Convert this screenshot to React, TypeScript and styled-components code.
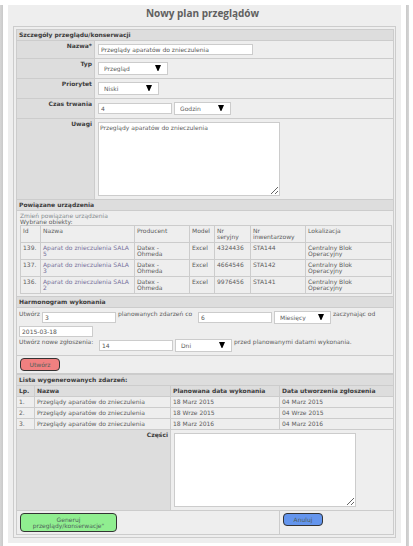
import React from "react";
import styled, { createGlobalStyle } from "styled-components";

const GlobalStyle = createGlobalStyle`
  * { box-sizing: border-box; }
  body {
    margin: 0;
    background: #fff;
    color: #5c5c5c;
    font-family: "DejaVu Sans", Verdana, sans-serif;
    font-size: 6px;
    line-height: 6px;
  }
`;

const line = "#cccccc";

const Page = styled.div`
  display: flex;
  min-height: 100vh;
  padding: 5px 4px 0 0;
`;

const Rail = styled.div<{ $side: "left" | "right" }>`
  flex: none;
  width: 3px;
  background: linear-gradient(to ${(p) => p.$side}, #c9c9c9, #d6d6d6);
`;

const Main = styled.main`
  flex: 1;
  min-width: 0;
  align-self: flex-start;
  margin: 0 5px;
  padding: 0 5px 5px;
  background: #eeeeee;
`;

const Title = styled.h1`
  margin: 0;
  padding: 2px 4px 7px 0;
  color: #606060;
  font-family: "Open Sans", "DejaVu Sans", sans-serif;
  font-size: 10px;
  line-height: 12px;
  text-align: center;
`;

const Frame = styled.form`
  padding: 2px 1px 2px 2px;
  border: 1px solid ${line};
`;

const Table = styled.table`
  width: 100%;
  border-collapse: collapse;
  table-layout: fixed;
`;

const Col = styled.col<{ $w?: number }>`
  width: ${(p) => (p.$w ? `${p.$w}px` : "auto")};
`;

const Cell = styled.td<{ $pad?: string }>`
  padding: ${(p) => p.$pad ?? "2px"};
  border: 1px solid ${line};
  text-align: left;
  vertical-align: top;
  white-space: pre-line;
`;

const HeadCell = styled.th<{ $align?: string }>`
  padding: 2px;
  border: 1px solid ${line};
  background: #dddddd;
  color: #3c3c3c;
  font-weight: bold;
  text-align: ${(p) => p.$align ?? "left"};
  vertical-align: top;
`;

const DeviceHead = styled.th`
  height: 17px;
  padding: 2px;
  border: 1px solid ${line};
  font-weight: normal;
  text-align: left;
  vertical-align: top;
  white-space: pre-line;
`;

const Line = styled.div`
  display: flex;
  align-items: center;
  gap: 2px;
`;

const Schedule = styled.div`
  display: flex;
  flex-direction: column;
  gap: 2px;
`;

const Caption = styled.label<{ $w?: number }>`
  align-self: flex-start;
  min-width: ${(p) => p.$w ?? 0}px;
  white-space: nowrap;
`;

const Input = styled.input<{ $wide?: boolean }>`
  display: block;
  width: ${(p) => (p.$wide ? 155 : 74)}px;
  height: 11px;
  padding: 0 2px;
  border: 1px solid ${line};
  border-radius: 0;
  background: #fff;
  color: #555;
  font: inherit;
`;

const TextArea = styled.textarea`
  display: block;
  width: 182px;
  height: 74px;
  padding: 2px 1px;
  border: 1px solid ${line};
  background: #fff;
  color: #5c5c5c;
  font: inherit;
  resize: both;
`;

const SelectBox = styled.span<{ $w: number }>`
  position: relative;
  display: block;
  width: ${(p) => p.$w}px;
  height: 13px;
`;

const NativeSelect = styled.select`
  display: block;
  width: 100%;
  height: 100%;
  padding: 0 14px 0 5px;
  border: 1px solid ${line};
  border-radius: 0;
  appearance: none;
  background: #fff;
  color: #5c5c5c;
  font: inherit;
`;

const Arrow = styled.svg`
  position: absolute;
  top: 3px;
  right: 7px;
  width: 6px;
  height: 6px;
  pointer-events: none;
`;

const Button = styled.button<{ $bg: string; $wide?: boolean }>`
  display: block;
  width: ${(p) => (p.$wide ? 97 : 40)}px;
  padding: 3px 2px 2px;
  border: 1px solid #333;
  border-radius: 4px;
  background: ${(p) => p.$bg};
  color: #4f5f5a;
  font: inherit;
  text-align: center;
`;

const Link = styled.a<{ $tone?: string }>`
  color: ${(p) => p.$tone ?? "#858c8e"};
  text-decoration: none;
`;

function Select({ id, label, value, width }: { id: string; label?: string; value: string; width: number }) {
  return (
    <SelectBox $w={width}>
      <NativeSelect id={id} aria-label={label} defaultValue={value}>
        <option>{value}</option>
      </NativeSelect>
      <Arrow viewBox="0 0 6 6" aria-hidden="true">
        <path d="M0 0H6L3.4 6H2.6Z" fill="#000" />
      </Arrow>
    </SelectBox>
  );
}

const deviceColumns = ["Id", "Nazwa", "Producent", "Model", "Nr\nseryjny", "Nr\ninwentarzowy", "Lokalizacja"];

const devices = [
  ["139.", "Aparat do znieczulenia SALA\n5", "Datex -\nOhmeda", "Excel", "4324436", "STA144", "Centralny Blok\nOperacyjny"],
  ["137.", "Aparat do znieczulenia SALA\n3", "Datex -\nOhmeda", "Excel", "4664546", "STA142", "Centralny Blok\nOperacyjny"],
  ["136.", "Aparat do znieczulenia SALA\n2", "Datex -\nOhmeda", "Excel", "9976456", "STA141", "Centralny Blok\nOperacyjny"],
];

const events = [
  ["1.", "Przeglądy aparatów do znieczulenia", "18 Marz 2015", "04 Marz 2015"],
  ["2.", "Przeglądy aparatów do znieczulenia", "18 Wrze 2015", "04 Wrze 2015"],
  ["3.", "Przeglądy aparatów do znieczulenia", "18 Marz 2016", "04 Marz 2016"],
];

function Field({ id, label, children }: { id: string; label: string; children: React.ReactNode }) {
  return (
    <tr>
      <HeadCell scope="row" $align="right">
        <label htmlFor={id}>{label}</label>
      </HeadCell>
      <Cell $pad="3px">{children}</Cell>
    </tr>
  );
}

function Section({ children }: { children: React.ReactNode }) {
  return (
    <tr>
      <HeadCell colSpan={2}>{children}</HeadCell>
    </tr>
  );
}

export default function App() {
  return (
    <>
      <GlobalStyle />
      <Page>
        <Rail $side="left" />
        <Main>
          <Title>Nowy plan przeglądów</Title>
          <Frame onSubmit={(e) => e.preventDefault()}>
            <Table>
              <colgroup>
                <Col $w={78} />
                <Col />
              </colgroup>
              <tbody>
                <Section>Szczegóły przeglądu/konserwacji</Section>
                <Field id="name" label="Nazwa*">
                  <Input id="name" $wide defaultValue="Przeglądy aparatów do znieczulenia" />
                </Field>
                <Field id="type" label="Typ">
                  <Select id="type" value="Przegląd" width={70} />
                </Field>
                <Field id="priority" label="Priorytet">
                  <Select id="priority" value="Niski" width={61} />
                </Field>
                <Field id="duration" label="Czas trwania">
                  <Line>
                    <Input id="duration" defaultValue="4" />
                    <Select id="duration-unit" label="Jednostka czasu" value="Godzin" width={57} />
                  </Line>
                </Field>
                <Field id="notes" label="Uwagi">
                  <TextArea id="notes" spellCheck={false} defaultValue="Przeglądy aparatów do znieczulenia" />
                </Field>
                <Section>Powiązane urządzenia</Section>
                <tr>
                  <Cell colSpan={2} $pad="2px 1px 2px 3px">
                    <div>
                      <Link href="#devices">Zmień powiązane urządzenia</Link>
                    </div>
                    <div>Wybrane obiekty:</div>
                    <Table id="devices">
                      <colgroup>
                        <Col $w={20} />
                        <Col $w={94} />
                        <Col $w={55} />
                        <Col $w={25} />
                        <Col $w={36} />
                        <Col $w={55} />
                        <Col />
                      </colgroup>
                      <thead>
                        <tr>
                          {deviceColumns.map((h) => (
                            <DeviceHead key={h} scope="col">{h}</DeviceHead>
                          ))}
                        </tr>
                      </thead>
                      <tbody>
                        {devices.map((row) => (
                          <tr key={row[0]}>
                            {row.map((text, i) => (
                              <Cell key={i}>
                                {i === 1 ? <Link href="#devices" $tone="#77719b">{text}</Link> : text}
                              </Cell>
                            ))}
                          </tr>
                        ))}
                      </tbody>
                    </Table>
                  </Cell>
                </tr>
                <Section>Harmonogram wykonania</Section>
                <tr>
                  <Cell colSpan={2} $pad="3px 2px">
                    <Schedule>
                      <Line>
                        <Caption htmlFor="count">Utwórz</Caption>
                        <Input id="count" defaultValue="3" />
                        <Caption htmlFor="every" $w={78}>planowanych zdarzeń co</Caption>
                        <Input id="every" defaultValue="6" />
                        <Select id="every-unit" label="Jednostka okresu" value="Miesięcy" width={57} />
                        <Caption htmlFor="start">zaczynając od</Caption>
                      </Line>
                      <Input id="start" defaultValue="2015-03-18" />
                      <Line>
                        <Caption htmlFor="lead" $w={78}>Utwórz nowe zgłoszenia:</Caption>
                        <Input id="lead" defaultValue="14" />
                        <Select id="lead-unit" label="Jednostka wyprzedzenia" value="Dni" width={57} />
                        <Caption htmlFor="lead">przed planowanymi datami wykonania.</Caption>
                      </Line>
                    </Schedule>
                  </Cell>
                </tr>
                <tr>
                  <Cell colSpan={2} $pad="2px 3px">
                    <Button type="button" $bg="#f08080">Utwórz</Button>
                  </Cell>
                </tr>
              </tbody>
            </Table>
            <Table>
              <colgroup>
                <Col $w={18} />
                <Col $w={136} />
                <Col $w={109} />
                <Col />
              </colgroup>
              <tbody>
                <tr>
                  <HeadCell colSpan={4}>Lista wygenerowanych zdarzeń:</HeadCell>
                </tr>
                <tr>
                  {["Lp.", "Nazwa", "Planowana data wykonania", "Data utworzenia zgłoszenia"].map((h) => (
                    <HeadCell key={h} scope="col">{h}</HeadCell>
                  ))}
                </tr>
                {events.map((row) => (
                  <tr key={row[0]}>
                    {row.map((text, i) => (
                      <Cell key={i}>{text}</Cell>
                    ))}
                  </tr>
                ))}
                <tr>
                  <HeadCell colSpan={2} scope="row" $align="right">
                    <label htmlFor="parts">Części</label>
                  </HeadCell>
                  <Cell colSpan={2} $pad="3px">
                    <TextArea id="parts" />
                  </Cell>
                </tr>
                <tr>
                  <Cell colSpan={3} $pad="2px 3px">
                    <Button type="submit" $wide $bg="#90ee90">Generuj przeglądy/konserwacje"</Button>
                  </Cell>
                  <Cell $pad="2px 3px">
                    <Button type="button" $bg="#6495ed">Anuluj</Button>
                  </Cell>
                </tr>
              </tbody>
            </Table>
          </Frame>
        </Main>
        <Rail $side="right" />
      </Page>
    </>
  );
}
